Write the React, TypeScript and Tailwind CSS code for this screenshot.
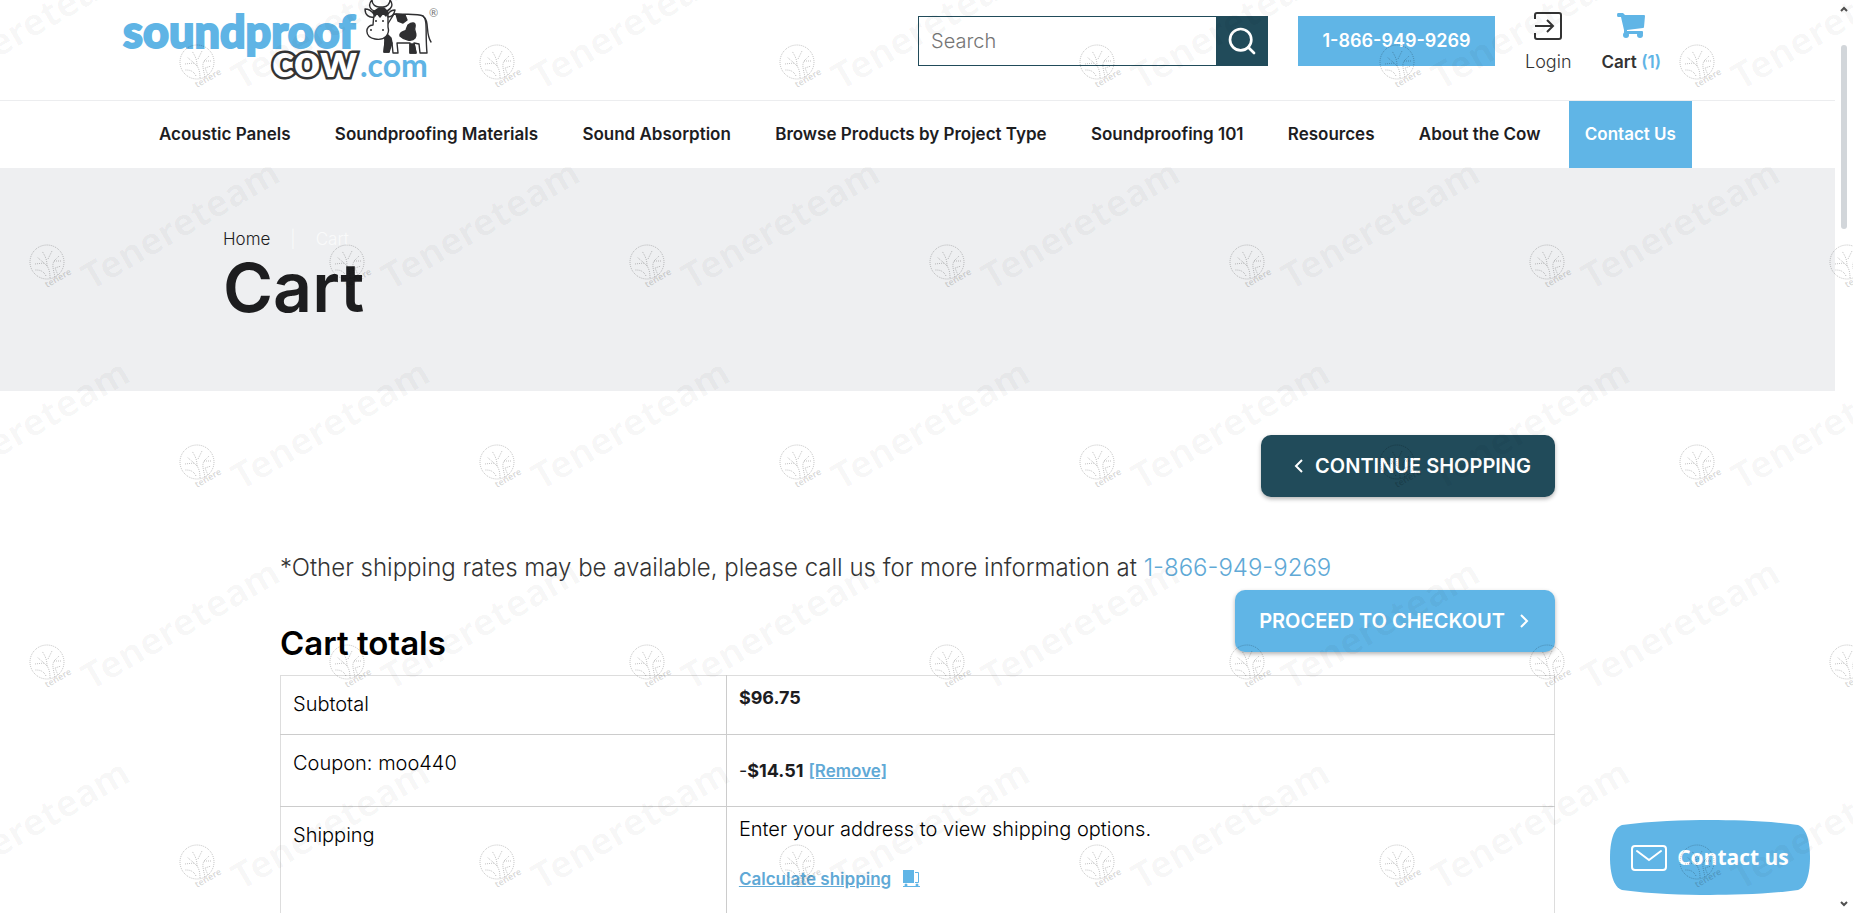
import { Search } from "lucide-react";

const navItems = [
  "Acoustic Panels",
  "Soundproofing Materials",
  "Sound Absorption",
  "Browse Products by Project Type",
  "Soundproofing 101",
  "Resources",
  "About the Cow",
];

function Logo() {
  return (
    <svg width="320" height="90" viewBox="0 0 320 90" className="overflow-visible" role="img" aria-label="Soundproof Cow">
      <text x="1" y="48" className="fill-[#5fb4e5] stroke-[#5fb4e5] stroke-[2px] font-['Lato'] text-[45px] font-black">
        soundproof
      </text>
      <text
        x="150"
        y="77"
        className="fill-white stroke-[#333333] stroke-[5px] font-['Lato'] text-[46px] font-black [paint-order:stroke]"
      >
        cow
      </text>
      <text x="238" y="77" className="fill-[#5fb4e5] font-['Lato'] text-[32px] font-bold">
        .com
      </text>
      {/* cow */}
      <g stroke="#2f2f31" strokeWidth="1.4" strokeLinejoin="round" strokeLinecap="round">
        <path
          fill="#fff"
          d="M272 14C282 15 295 13 301 16C306 20 303 32 305 53L298 53L297 44L292 43L294 53L288 53L288 43L275 43L276 53L271 53L270 43L268 43L267 52L262 52L263 41L262 30Z"
        />
        <path fill="none" d="M301 16C308 21 303 33 309 42" />
        <path
          fill="#2f2f31"
          d="M274 14L283 15L285 20L281 23L276 21ZM286 25C290 22 294 22 293 27C291 31 296 33 293 38C290 42 282 40 278 36C277 31 283 32 284 30ZM264 33L269 38L270 43L267 52L262 52ZM288 44L292 44L294 53L288 53Z"
        />
        <path fill="#fff" d="M252 13L251 25C243 25 242 37 253 39C263 41 268 34 266 27L266 14Z" />
        <path fill="#fff" d="M252 14C249 10 245 9 243 9C243 15 247 18 252 17ZM266 14C268 11 271 10 273 10C272 15 269 17 266 17Z" />
        <path fill="#fff" d="M252 11C246 8 247 3 250 0C250 5 254 7 257 7L261 7C265 7 268 4 268 0C272 5 269 9 265 11Z" />
        <path fill="#2f2f31" d="M251 12L257 8L262 8L266 12L264 16L261 13L258 17L255 13L253 16Z" />
      </g>
      <circle cx="249" cy="30" r="1" fill="#2f2f31" />
      <circle cx="261" cy="30" r="1" fill="#2f2f31" />
      <path d="M254 20v2M261 20v2" stroke="#2f2f31" strokeWidth="1.5" />
      <text x="307" y="17" className="fill-[#777777] font-['Lato'] text-[11px]">
        ®
      </text>
    </svg>
  );
}

function Header() {
  return (
    <header>
      <div className="h-[101px] border-b border-[#ecedef]">
        <div className="mx-auto flex max-w-[1591px] items-start justify-between pr-[52px]">
          <a href="#home">
            <Logo />
          </a>
          <div className="flex items-start pt-4">
            <form className="flex h-[50px] w-[350px] border border-[#214b5a]">
              <input
                type="text"
                aria-label="Search"
                placeholder="Search"
                className="min-w-0 flex-1 px-3 text-xl font-light placeholder:text-[#757575]"
              />
              <button type="submit" aria-label="Submit search" className="flex w-[51px] items-center justify-center bg-[#214b5a] text-white">
                <Search size={32} strokeWidth={2} />
              </button>
            </form>
            <a
              href="tel:1-866-949-9269"
              className="ml-[30px] flex h-[50px] w-[197px] items-center justify-center bg-[#60b5e6] text-lg font-semibold text-white"
            >
              1-866-949-9269
            </a>
            <a href="#login" className="ml-[30px] flex flex-col items-center text-lg leading-6 font-light text-[#333333]">
              <svg width="28" height="28" viewBox="0 0 28 28" fill="none" stroke="currentColor" strokeWidth="2" className="-mt-1 mb-[10px]">
                <path d="M1 7V3a2 2 0 0 1 2-2h22a2 2 0 0 1 2 2v22a2 2 0 0 1-2 2H3a2 2 0 0 1-2-2v-4" />
                <path d="M1 14h17M13 8l6 6-6 6" />
              </svg>
              Login
            </a>
            <a href="#cart" className="ml-[30px] flex flex-col items-center text-[17px] leading-6 font-semibold text-[#333333]">
              <svg width="28" height="28" viewBox="0 0 28 28" fill="#60b5e6" className="-mt-1 mb-[10px]">
                <path d="M1 1h5l2 2h19q1 0 1 1l-1 11q0 1-1 1L10 18v1h15q1 0 1 1v2H8q-1 0-1-1V18L4 5H1q-1 0-1-2T1 1Z" />
                <circle cx="9" cy="23" r="3" />
                <circle cx="23" cy="23" r="3" />
              </svg>
              <span>
                Cart <span className="text-[#60b5e6]">(1)</span>
              </span>
            </a>
          </div>
        </div>
      </div>
      <nav className="mx-auto flex h-[67px] max-w-[1549px] items-center justify-between text-[17px] font-semibold text-[#1d1d1f]">
        {navItems.map((item, i) => (
          <a key={item} href="#nav" className={i === 0 ? "pl-4" : ""}>
            {item}
          </a>
        ))}
        <a href="#contact" className="-ml-4 flex h-full items-center bg-[#60b5e6] px-4 text-white">
          Contact Us
        </a>
      </nav>
    </header>
  );
}

function Hero() {
  return (
    <section className="h-[223px] bg-[#eeeff1]">
      <div className="mx-auto max-w-[1389px] pt-[59px] text-[#1d1d1f]">
        <div className="flex gap-5 text-[17px] leading-6 font-light">
          <a href="#home">Home</a>
          <span className="text-white/70">|</span>
          <span className="text-white/70">Cart</span>
        </div>
        <h1 className="text-[68px] leading-[72px] font-semibold">Cart</h1>
      </div>
    </section>
  );
}

function CartTotals() {
  return (
    <main className="mx-auto max-w-[1275px]">
      <div className="flex justify-end pt-11">
        <a
          href="#shop"
          className="flex h-[62px] items-center gap-2 rounded-[10px] bg-[#214b5a] pr-6 pl-8 text-xl font-semibold text-white shadow-[0_2px_4px_rgba(0,0,0,0.3)]"
        >
          <svg width="14" height="14" viewBox="0 0 14 14" fill="none" stroke="currentColor" strokeWidth="2">
            <path d="M9 1 3 7l6 6" />
          </svg>
          CONTINUE SHOPPING
        </a>
      </div>
      <p className="pt-[55px] text-2xl leading-8 font-light text-[#333333]">
        *Other shipping rates may be available, please call us for more information at{" "}
        <a href="tel:1-866-949-9269" className="text-[#60a9d6]">
          1-866-949-9269
        </a>
      </p>
      <div className="flex items-start justify-between pt-[6px]">
        <h2 className="pt-[33px] text-[33px] leading-10 font-semibold text-black">Cart totals</h2>
        <a
          href="#checkout"
          className="flex h-[62px] items-center gap-3 rounded-[10px] bg-[#60b5e6] px-6 text-xl font-semibold text-white shadow-[0_2px_4px_rgba(0,0,0,0.3)]"
        >
          PROCEED TO CHECKOUT
          <svg width="14" height="14" viewBox="0 0 14 14" fill="none" stroke="currentColor" strokeWidth="2">
            <path d="m4 1 6 6-6 6" />
          </svg>
        </a>
      </div>
      <table className="mt-3 w-full border border-[#dddddd] text-left text-xl leading-6 text-black">
        <tbody>
          <tr className="h-[59px] border-b border-[#cccccc] align-top">
            <th scope="row" className="w-[35%] border-r border-[#cccccc] px-3 pt-4 font-light">Subtotal</th>
            <td className="px-3 pt-[10px] text-lg leading-6 font-bold text-[#1d1d1f]">$96.75</td>
          </tr>
          <tr className="h-[72px] border-b border-[#cccccc] align-top">
            <th scope="row" className="border-r border-[#cccccc] px-3 pt-4 font-light">Coupon: moo440</th>
            <td className="px-3 pt-6 text-lg leading-6 text-[#1d1d1f]">
              -<span className="font-bold">$14.51</span>{" "}
              <a href="#remove" className="text-[17px] font-semibold text-[#60a9d6] underline">
                [Remove]
              </a>
            </td>
          </tr>
          <tr className="h-[200px] align-top">
            <th scope="row" className="border-r border-[#cccccc] px-3 pt-4 font-light">Shipping</th>
            <td className="px-3 pt-[10px] font-light">
              Enter your address to view shipping options.
              <a href="#calculate" className="mt-[26px] flex items-center gap-3 text-[17px] font-semibold text-[#60a9d6]">
                <span className="underline">Calculate shipping</span>
                <svg width="18" height="18" viewBox="0 0 18 18" fill="#60b5e6">
                  <path d="M0 0h11v13H0z" />
                  <path d="M12 2.500h3.500v10H12" fill="none" stroke="#60b5e6" />
                  <path d="M0 16.500h17" stroke="#60b5e6" />
                  <circle cx="3" cy="15" r="1.500" />
                  <circle cx="14" cy="15" r="1.500" />
                </svg>
              </a>
            </td>
          </tr>
        </tbody>
      </table>
    </main>
  );
}

function ContactWidget() {
  return (
    <button type="button" className="absolute right-[43px] bottom-[18px] flex h-[75px] w-[200px] items-center justify-center text-white">
      <svg width="200" height="75" viewBox="0 0 200 75" className="absolute inset-0">
        <path
          fill="#60b5e6"
          d="M12 5C40 1 75 0 100 0s60 1 88 5c9 3 12 18 12 32.500S197 67 188 70c-28 4-63 5-88 5s-60-1-88-5C3 67 0 52 0 37.500S3 8 12 5Z"
        />
      </svg>
      <span className="relative flex items-center gap-[10px] font-['Open_Sans'] text-[21px] font-bold">
        <svg width="36" height="26" viewBox="0 0 36 26" fill="none" stroke="currentColor" strokeWidth="2" strokeLinecap="round">
          <rect x="1" y="1" width="34" height="24" rx="3" />
          <path d="m6 6 12 9 12-9" />
        </svg>
        Contact us
      </span>
    </button>
  );
}

function Scrollbar() {
  return (
    <div className="flex w-[18px] flex-col items-center bg-white py-[6px] text-[#505050]">
      <svg width="8" height="6" viewBox="0 0 8 6" fill="none" stroke="currentColor" strokeWidth="2">
        <path d="m1 5 3-3 3 3" />
      </svg>
      <div className="mt-[33px] h-[184px] w-[6px] rounded-full bg-[#d2d6da]" />
      <svg width="8" height="6" viewBox="0 0 8 6" fill="none" stroke="currentColor" strokeWidth="2" className="mt-auto">
        <path d="m1 1 3 3 3-3" />
      </svg>
    </div>
  );
}

const watermarkRows = [-138, 62, 262, 462, 662, 862, 1062];
const watermarkCols = [-1, 0, 1, 2, 3, 4, 5, 6];

function Watermark() {
  return (
    <svg className="pointer-events-none absolute inset-0 h-full w-full" aria-hidden="true">
      <defs>
        <g id="mark">
          <g fill="none" stroke="#000" strokeOpacity="0.24" strokeDasharray="1 1">
            <circle r="17" />
            <path d="M3 16C3 8 1 4-3 1L-10-5M-3 1l-9 1M8 15C6 6 5 3 7-1l5-5M7-1l7 0M0 4C0-3-2-6-5-11M1-3l4-8M-1 14C-4 8-8 8-12 8M11 13l-3-7 6-2" />
          </g>
          <text x="0" y="26" transform="rotate(-30 0 26)" fillOpacity="0.17" className="font-['Noto_Sans'] text-[9px] font-semibold">
            tenere
          </text>
          <text x="44" y="29" transform="rotate(-30 44 29)" fillOpacity="0.03" className="font-['Noto_Sans'] text-[37px] font-bold">
            Tenereteam
          </text>
        </g>
      </defs>
      {watermarkRows.map((y, row) =>
        watermarkCols.map((col) => <use key={`${y}-${col}`} href="#mark" x={col * 300 + (row % 2 ? 197 : 47)} y={y} />),
      )}
    </svg>
  );
}

export default function App() {
  return (
    <div className="relative flex h-screen overflow-hidden bg-white font-['Inter',sans-serif]">
      <div className="min-w-0 flex-1">
        <Header />
        <Hero />
        <CartTotals />
      </div>
      <Scrollbar />
      <ContactWidget />
      <Watermark />
    </div>
  );
}
